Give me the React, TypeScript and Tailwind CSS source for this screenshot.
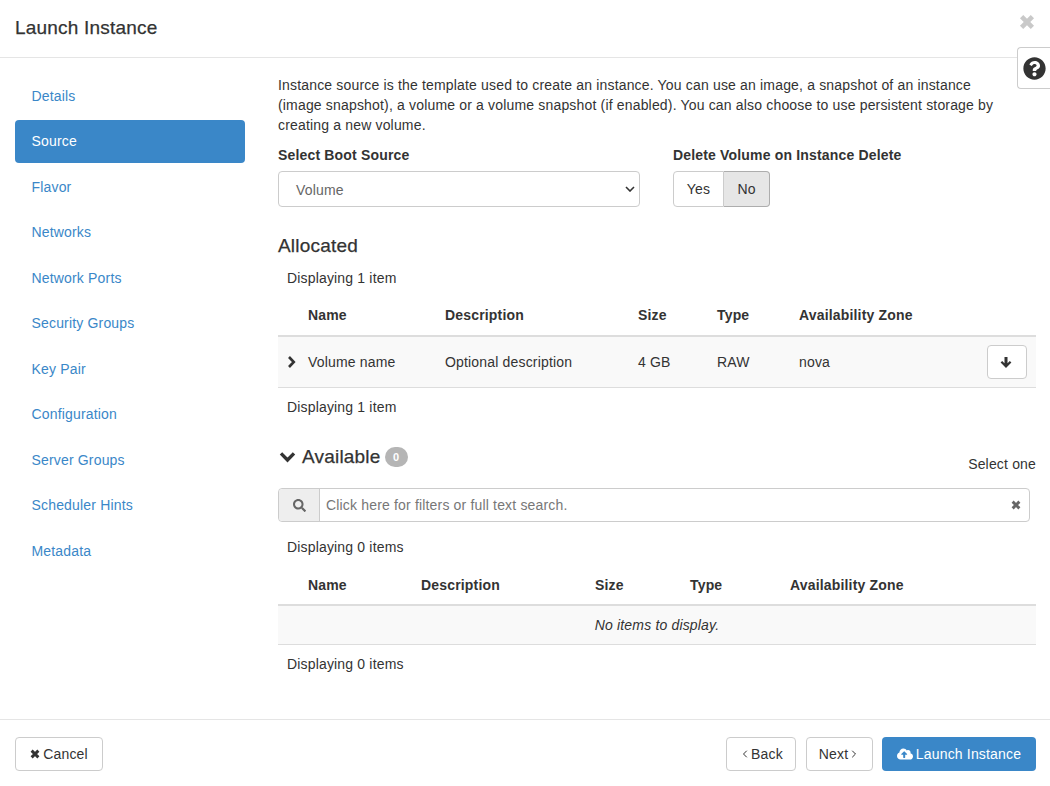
import React from 'react';
import { FaCloudUploadAlt, FaQuestionCircle, FaSearch } from 'react-icons/fa';
import { LuChevronLeft, LuChevronRight } from 'react-icons/lu';

const steps = [
  'Details',
  'Source',
  'Flavor',
  'Networks',
  'Network Ports',
  'Security Groups',
  'Key Pair',
  'Configuration',
  'Server Groups',
  'Scheduler Hints',
  'Metadata',
];

const btn =
  'h-[34px] flex items-center justify-center border border-[#ccc] rounded-[4px] bg-white text-[#333]';

const heading = "text-[19px] leading-[26px] tracking-[0.2px] font-medium [-webkit-text-stroke:0.25px]";

const Cross = ({ className }: { className: string }) => (
  <svg viewBox="0 0 16 16" className={className} fill="none" stroke="currentColor" strokeWidth="4.6">
    <path d="M2.6 2.6L13.4 13.4M13.4 2.6L2.6 13.4" />
  </svg>
);

const ChevronRight = ({ className }: { className: string }) => (
  <svg viewBox="0 0 9 12" className={className} fill="none" stroke="currentColor" strokeWidth="2.6">
    <path d="M2 1L6.8 6L2 11" />
  </svg>
);

const ChevronDown = ({ className }: { className: string }) => (
  <svg viewBox="0 0 17 12" className={className} fill="none" stroke="currentColor" strokeWidth="3.4">
    <path d="M2 2.4L8.5 9L15 2.4" />
  </svg>
);

const ArrowDown = ({ className }: { className: string }) => (
  <svg viewBox="0 0 12 11" className={className} fill="currentColor">
    <path d="M6 11L0.6 5.6L2.2 4L4.5 6.2V0H7.5V6.2L9.8 4L11.4 5.6Z" />
  </svg>
);

const Counter = ({ label }: { label: string }) => <p className="leading-5 pl-[9px]">{label}</p>;

const App: React.FC = () => {
  return (
    <div className="relative w-[1050px] h-[786px] overflow-hidden bg-white text-[#333] font-['Liberation_Sans',Arial,sans-serif] text-[14px] leading-5 tracking-[0.17px]">
      <header className="h-[58px] border-b border-[#e5e5e5] pl-[15px] pt-[15px]">
        <h1 className={heading}>Launch Instance</h1>
      </header>
      <Cross className="absolute left-[1019px] top-[14px] w-[16px] h-[16px] text-[#c9c9c9]" />
      <div className="absolute right-0 top-[47px] w-[33px] h-[42px] bg-white border border-r-0 border-[#ccc] rounded-l-[4px] flex items-center pl-[5px]">
        <FaQuestionCircle className="w-[23px] h-[23px] text-[#333]" />
      </div>

      <div className="h-[661px] flex">
        <nav className="w-[230px] ml-[15px] mt-[16.5px] flex flex-col gap-[2.5px] shrink-0">
          {steps.map((step) => (
            <div
              key={step}
              className={
                step === 'Source'
                  ? 'h-[43px] flex items-center pl-[16.5px] pb-[1px] rounded-[4px] bg-[#3a87c8] text-white'
                  : 'h-[43px] flex items-center pl-[16.5px] pb-[1px] text-[#3a87c8]'
              }
            >
              {step}
            </div>
          ))}
        </nav>

        <main className="w-[758px] ml-[33px] pt-[17px]">
          <p className="w-[725px]">
            Instance source is the template used to create an instance. You can use an image, a snapshot of an instance
            (image snapshot), a volume or a volume snapshot (if enabled). You can also choose to use persistent storage by
            creating a new volume.
          </p>

          <div className="flex mt-[10px]">
            <div className="w-[362px]">
              <label className="block font-bold">Select Boot Source</label>
              <div className="mt-[6px] h-[36px] w-[362px] border border-[#ccc] rounded-[4px] bg-white flex items-center justify-between pl-[17px] pr-[4px]">
                <span className="text-[#666] pt-[1px]">Volume</span>
                <svg viewBox="0 0 10 6" className="w-[10px] h-[6px]" fill="none" stroke="#333" strokeWidth="1.6">
                  <path d="M1 1L5 5L9 1" />
                </svg>
              </div>
            </div>
            <div className="ml-[33px]">
              <label className="block font-bold">Delete Volume on Instance Delete</label>
              <div className="mt-[6px] flex h-[36px] w-[97px]">
                <div className="w-[51px] flex items-center justify-center border border-[#ccc] rounded-l-[4px]">Yes</div>
                <div className="w-[46px] flex items-center justify-center border border-l-0 border-[#adadad] rounded-r-[4px] bg-[#e6e6e6]">
                  No
                </div>
              </div>
            </div>
          </div>

          <h2 className={`mt-[26px] ${heading}`}>Allocated</h2>
          <div className="mt-[9px]">
            <Counter label="Displaying 1 item" />
          </div>

          <div className="grid grid-cols-[30px_137px_193px_79px_82px_1fr] h-[49px] border-b-2 border-[#ddd] items-center font-bold pt-[6px]">
            <span />
            <span>Name</span>
            <span>Description</span>
            <span>Size</span>
            <span>Type</span>
            <span>Availability Zone</span>
          </div>
          <div className="grid grid-cols-[30px_137px_193px_79px_82px_1fr_58px] h-[51px] border-b border-[#ddd] bg-[#f9f9f9] items-center">
            <ChevronRight className="w-[9px] h-[12px] ml-[9px]" />
            <span>Volume name</span>
            <span>Optional description</span>
            <span>4 GB</span>
            <span>RAW</span>
            <span>nova</span>
            <div className={`${btn} w-[40px] h-[33px] ml-[9px]`}>
              <ArrowDown className="w-[12px] h-[11px] mr-[2px]" />
            </div>
          </div>
          <div className="mt-[9px]">
            <Counter label="Displaying 1 item" />
          </div>

          <div className="mt-[27px] flex items-start justify-between">
            <div className="flex items-center h-[26px]">
              <ChevronDown className="ml-[1px] w-[17px] h-[12px]" />
              <span className={`ml-[6px] ${heading}`}>Available</span>
              <span className="ml-[4px] h-[20px] min-w-[23px] rounded-[10px] bg-[#b5b5b5] text-white text-[11px] font-bold leading-5 text-center">
                0
              </span>
            </div>
            <span className="mt-[10px]">Select one</span>
          </div>

          <div className="mt-[14px] flex h-[34px] w-[752px] border border-[#ccc] rounded-[4px]">
            <div className="w-[41px] bg-[#eee] border-r border-[#ccc] rounded-l-[4px] flex items-center justify-center">
              <FaSearch className="w-[13px] h-[13px] text-[#666]" />
            </div>
            <div className="flex-1 flex items-center justify-between pl-[6px] pr-[8px] text-[#777]">
              <span>Click here for filters or full text search.</span>
              <Cross className="w-[10px] h-[10px] text-[#666]" />
            </div>
          </div>

          <div className="mt-[15px]">
            <Counter label="Displaying 0 items" />
          </div>

          <div className="grid grid-cols-[30px_113px_174px_95px_100px_1fr] h-[49px] border-b-2 border-[#ddd] items-center font-bold pt-[9px]">
            <span />
            <span>Name</span>
            <span>Description</span>
            <span>Size</span>
            <span>Type</span>
            <span>Availability Zone</span>
          </div>
          <div className="h-[39px] border-b border-[#ddd] bg-[#f9f9f9] flex items-center justify-center italic">
            No items to display.
          </div>
          <div className="mt-[9px]">
            <Counter label="Displaying 0 items" />
          </div>
        </main>
      </div>

      <footer className="h-[67px] border-t border-[#e5e5e5] flex items-start justify-between pl-[15px] pr-[14px] pt-[17px]">
        <div className={`${btn} w-[88px] gap-[3px]`}>
          <Cross className="w-[10px] h-[10px]" />
          Cancel
        </div>
        <div className="flex">
          <div className={`${btn} w-[70px]`}>
            <LuChevronLeft className="w-[12px] h-[12px]" />
            Back
          </div>
          <div className={`${btn} w-[67px] ml-[10px]`}>
            Next
            <LuChevronRight className="w-[12px] h-[12px]" />
          </div>
          <div className="ml-[9px] h-[34px] w-[154px] flex items-center justify-center gap-[3px] rounded-[4px] bg-[#3a87c8] text-white">
            <FaCloudUploadAlt className="w-[16px] h-[16px]" />
            Launch Instance
          </div>
        </div>
      </footer>
    </div>
  );
};

export default App;
